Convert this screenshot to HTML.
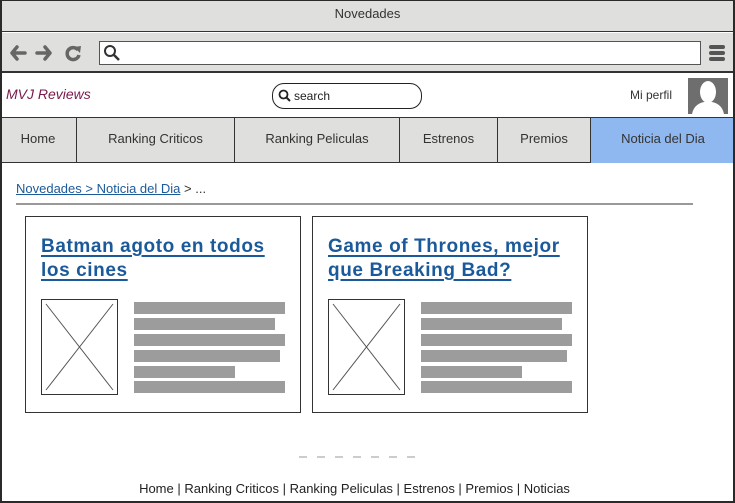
<!DOCTYPE html>
<html><head><meta charset="utf-8"><style>
*{margin:0;padding:0;box-sizing:border-box}
body{width:735px;height:503px;overflow:hidden;background:#fff;font-family:"Liberation Sans",sans-serif;color:#222;position:relative}
.a{position:absolute}
.frame{left:0;top:0;width:735px;height:503px;border:2px solid #2a2a2a;border-top-width:1px}
.bar{background:#dfdfdd}
.nav div{position:absolute;top:0;height:45px;line-height:42px;text-align:center;font-size:13px;color:#333;border-right:1px solid #333}
.card{border:1px solid #333;background:#fff}
.card h2{position:absolute;left:15px;top:18px;font-size:19px;font-weight:bold;color:#1b5a9a;line-height:24px;letter-spacing:0.6px}
.card h2 span{text-decoration:underline;text-underline-offset:3px;text-decoration-thickness:2px}
.gb{position:absolute;height:12px;background:#9c9c9c;left:108px}
</style></head><body>
<div class="a bar" style="left:0;top:0;width:735px;height:32px;border-bottom:1px solid #333"></div>
<div class="a" style="left:0;top:6px;width:735px;text-align:center;font-size:13px;color:#333">Novedades</div>
<div class="a bar" style="left:0;top:33px;width:735px;height:40px;border-bottom:2px solid #333"></div>
<svg class="a" style="left:8px;top:42px" width="80" height="22" viewBox="0 0 80 22">
<path d="M9 5 L4 11 L9 17 M4 11 H17" stroke="#666" stroke-width="3.5" fill="none" stroke-linecap="round" stroke-linejoin="round"/>
<path d="M37 5 L42 11 L37 17 M42 11 H29" stroke="#666" stroke-width="3.5" fill="none" stroke-linecap="round" stroke-linejoin="round"/>
<path d="M70 8 A6 6 0 1 0 71 13" stroke="#666" stroke-width="3.5" fill="none"/>
<path d="M66 5 L73 4 L72 11 Z" fill="#666"/>
</svg>
<div class="a" style="left:99px;top:41px;width:602px;height:24px;background:#fff;border:1px solid #555"></div>
<svg class="a" style="left:103px;top:44px" width="18" height="18"><circle cx="7" cy="7" r="5" stroke="#333" stroke-width="2" fill="none"/><path d="M11 11 L16 16" stroke="#333" stroke-width="2.5"/></svg>
<svg class="a" style="left:709px;top:44px" width="16" height="18"><rect x="0" y="1" width="16" height="4" rx="2" fill="#555"/><rect x="0" y="7" width="16" height="4" rx="2" fill="#555"/><rect x="0" y="13" width="16" height="4" rx="2" fill="#555"/></svg>
<div class="a" style="left:6px;top:86px;font-size:14px;font-style:italic;color:#7a1a4a">MVJ Reviews</div>
<div class="a" style="left:272px;top:83px;width:150px;height:26px;border:1.5px solid #222;border-radius:12px"></div>
<svg class="a" style="left:278px;top:89px" width="14" height="14"><circle cx="5.5" cy="5.5" r="4" stroke="#222" stroke-width="1.8" fill="none"/><path d="M8.5 8.5 L12 12" stroke="#222" stroke-width="2"/></svg>
<div class="a" style="left:294px;top:89px;font-size:12px">search</div>
<div class="a" style="left:630px;top:88px;font-size:12px;color:#333">Mi perfil</div>
<svg class="a" style="left:688px;top:78px" width="40" height="36" viewBox="0 0 40 36"><rect width="40" height="36" fill="#6e6e6e"/><ellipse cx="20" cy="14" rx="8" ry="11" fill="#fff"/><path d="M4 36 Q6 26 16 24 L24 24 Q34 26 36 36 Z" fill="#fff"/></svg>
<div class="a nav bar" style="left:0;top:117px;width:735px;height:46px;border-top:1px solid #333;border-bottom:1px solid #333">
<div style="left:0;width:77px">Home</div>
<div style="left:77px;width:158px">Ranking Criticos</div>
<div style="left:235px;width:165px">Ranking Peliculas</div>
<div style="left:400px;width:98px">Estrenos</div>
<div style="left:498px;width:93px">Premios</div>
<div style="left:591px;width:144px;background:#8fb8f0;border-right:none">Noticia del Dia</div>
</div>
<div class="a" style="left:16px;top:181px;font-size:13px;color:#333"><span style="color:#1b5a9a;text-decoration:underline">Novedades &gt; Noticia del Dia</span> &gt; ...</div>
<div class="a" style="left:16px;top:203px;width:677px;height:2px;background:#999"></div>

<div class="a card" style="left:25px;top:216px;width:276px;height:197px">
<h2><span>Batman agoto en todos </span><br><span>los cines</span></h2>
<svg class="a" style="left:15px;top:82px" width="77" height="96"><rect x="0.5" y="0.5" width="76" height="95" fill="#fff" stroke="#333"/><path d="M5 5 L72 91 M72 5 L5 91" stroke="#555" stroke-width="1"/></svg>
<div class="gb" style="top:85px;width:151px"></div><div class="gb" style="top:101px;width:141px"></div><div class="gb" style="top:117px;width:151px"></div><div class="gb" style="top:133px;width:146px"></div><div class="gb" style="top:149px;width:101px"></div><div class="gb" style="top:164px;width:151px"></div>
</div>
<div class="a card" style="left:312px;top:216px;width:276px;height:197px">
<h2><span>Game of Thrones, mejor </span><br><span>que Breaking Bad?</span></h2>
<svg class="a" style="left:15px;top:82px" width="77" height="96"><rect x="0.5" y="0.5" width="76" height="95" fill="#fff" stroke="#333"/><path d="M5 5 L72 91 M72 5 L5 91" stroke="#555" stroke-width="1"/></svg>
<div class="gb" style="top:85px;width:151px"></div><div class="gb" style="top:101px;width:141px"></div><div class="gb" style="top:117px;width:151px"></div><div class="gb" style="top:133px;width:146px"></div><div class="gb" style="top:149px;width:101px"></div><div class="gb" style="top:164px;width:151px"></div>
</div>

<svg class="a" style="left:299px;top:455px" width="120" height="4"><path d="M0 2 H117" stroke="#bbb" stroke-width="1.5" stroke-dasharray="8 10"/></svg>
<div class="a" style="left:136px;top:481px;width:437px;text-align:center;font-size:13px;color:#222;white-space:nowrap">Home | Ranking Criticos | Ranking Peliculas | Estrenos | Premios | Noticias</div>
<div class="a frame"></div>
</body></html>
